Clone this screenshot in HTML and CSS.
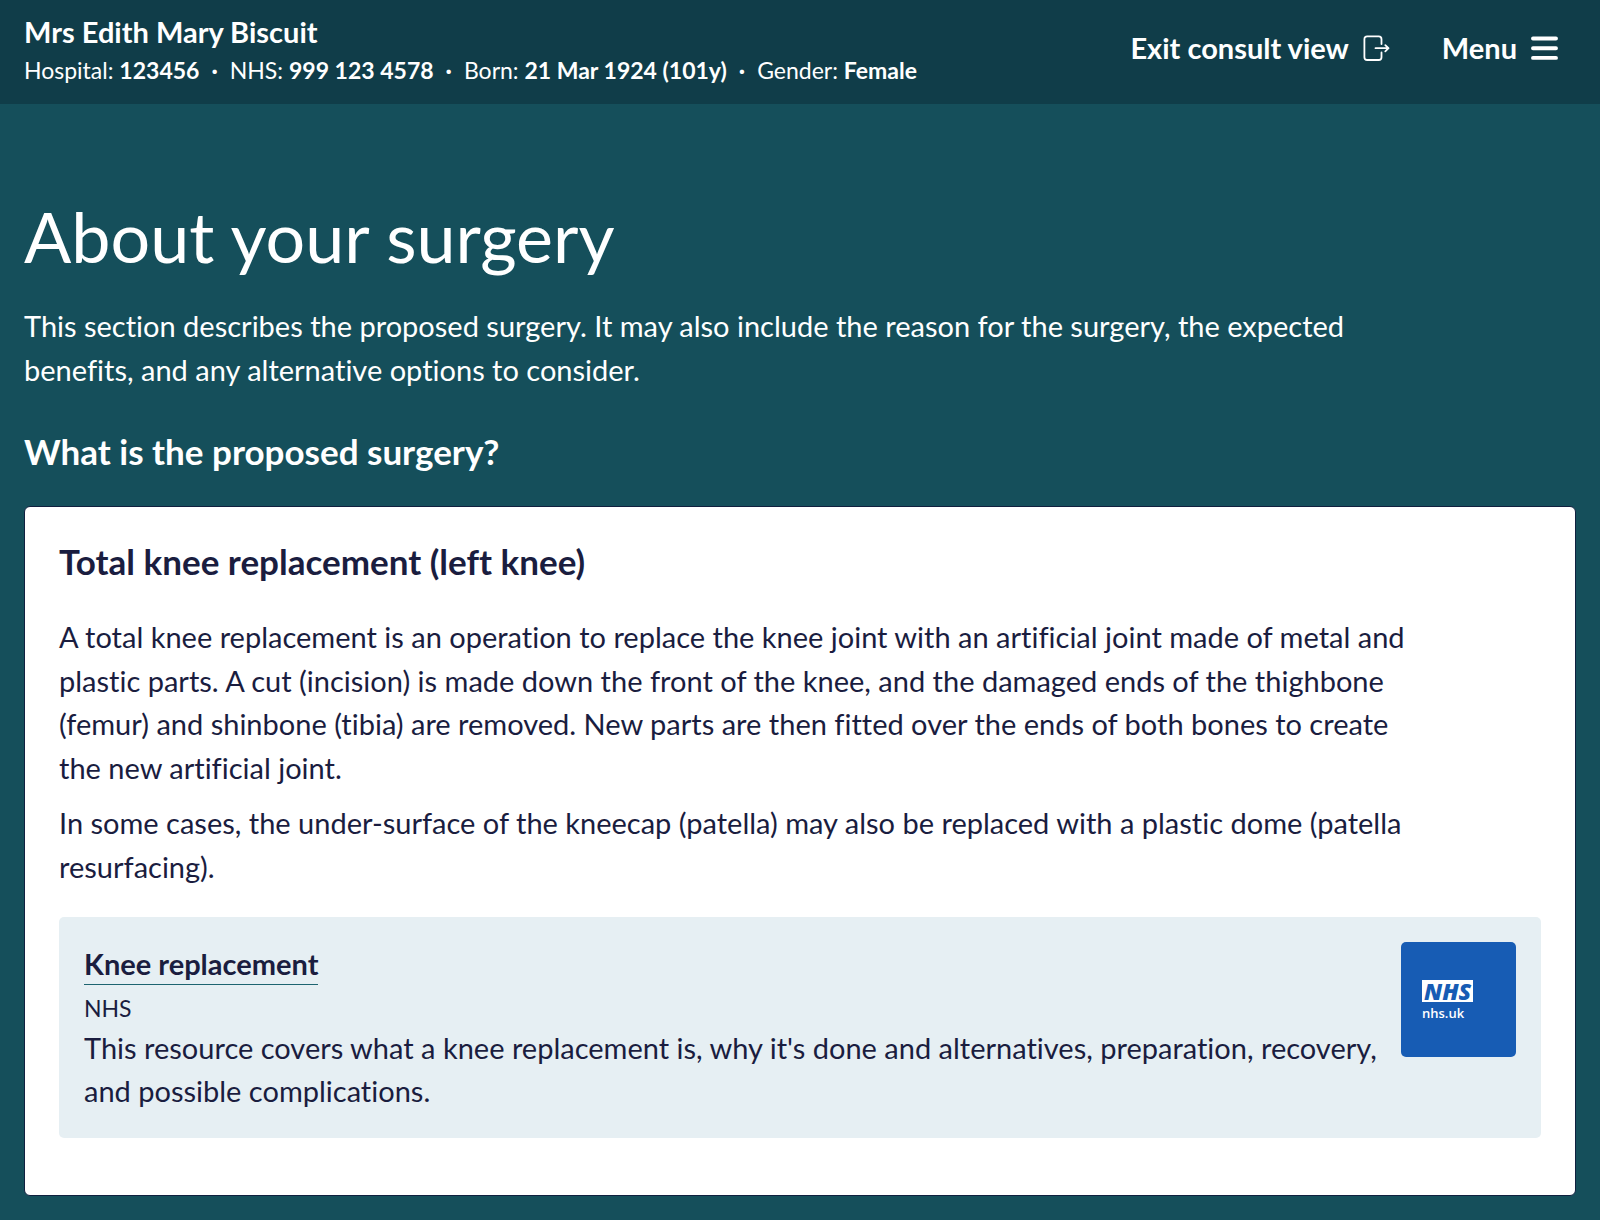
FILE: index.html
```html
<!DOCTYPE html>
<html lang="en">
<head>
<meta charset="utf-8">
<meta name="viewport" content="width=device-width, initial-scale=1">
<title>About your surgery</title>
<link rel="stylesheet" href="styles.css">
</head>
<body>
<header class="banner">
  <div class="patient">
    <p class="patient-name">Mrs Edith Mary Biscuit</p>
    <ul class="patient-details">
      <li>Hospital: <strong>123456</strong></li>
      <li>NHS: <strong>999 123 4578</strong></li>
      <li>Born: <strong>21 Mar 1924 (101y)</strong></li>
      <li>Gender: <strong>Female</strong></li>
    </ul>
  </div>
  <nav class="actions">
    <button type="button" class="action">Exit consult view
      <svg class="icon" viewBox="0 0 27 27" aria-hidden="true" fill="none" stroke="currentColor" stroke-width="1.8" stroke-linecap="round" stroke-linejoin="round">
        <path d="M18.500 9V4.200a2.800 2.800 0 0 0-2.800-2.800H4.200a2.800 2.800 0 0 0-2.800 2.800V22.200a2.800 2.800 0 0 0 2.800 2.800H15.700a2.800 2.800 0 0 0 2.800-2.800V17.500M12.500 13.200H25.500M22.300 10.100l3.200 3.100-3.200 3.100"/>
      </svg>
    </button>
    <button type="button" class="action">Menu
      <svg class="icon" viewBox="0 0 27 27" aria-hidden="true" fill="none" stroke="currentColor" stroke-width="3.900" stroke-linecap="round">
        <path d="M2 3.500H25M2 13.200H25M2 22.900H25"/>
      </svg>
    </button>
  </nav>
</header>
<main class="content">
  <h1 class="title">About your surgery</h1>
  <p class="intro">This section describes the proposed surgery. It may also include the reason for the surgery, the expected benefits, and any alternative options to consider.</p>
  <h2 class="question">What is the proposed surgery?</h2>
  <section class="card">
    <h3 class="card-title">Total knee replacement (left knee)</h3>
    <div class="prose">
      <p>A total knee replacement is an operation to replace the knee joint with an artificial joint made of metal and plastic parts. A cut (incision) is made down the front of the knee, and the damaged ends of the thighbone (femur) and shinbone (tibia) are removed. New parts are then fitted over the ends of both bones to create the new artificial joint.</p>
      <p>In some cases, the under-surface of the kneecap (patella) may also be replaced with a plastic dome (patella resurfacing).</p>
    </div>
    <article class="resource">
      <div class="resource-text">
        <a class="resource-link" href="#">Knee replacement</a>
        <p class="resource-source">NHS</p>
        <p>This resource covers what a knee replacement is, why it's done and alternatives, preparation, recovery, and possible complications.</p>
      </div>
      <div class="logo">
        <span class="logo-mark">NHS</span>
        <span class="logo-site">nhs.uk</span>
      </div>
    </article>
  </section>
</main>
</body>
</html>
```
FILE: styles.css
```css
* {
  box-sizing: border-box;
}

body {
  margin: 0;
  background: #154f5b;
  color: #fff;
  font-family: Lato, "Open Sans", sans-serif;
  font-size: 29px;
  font-variant-ligatures: none;
  line-height: 1.5;
}

h1, h2, h3, p, ul {
  margin: 0;
}

.banner {
  display: flex;
  justify-content: space-between;
  padding: 12px 24px 16px;
  background: #103d49;
}

.patient-name {
  font-weight: 700;
  line-height: 40px;
}

.patient-details {
  display: flex;
  padding: 0;
  list-style: none;
  font-size: 23px;
  line-height: 36px;
}

.patient-details li + li::before {
  content: "·";
  padding: 0 12px;
  font-weight: 700;
}

.actions {
  display: flex;
  align-items: center;
  gap: 52px;
  padding-right: 18px;
}

.action {
  display: flex;
  align-items: center;
  gap: 14px;
  padding: 0 0 4px;
  border: 0;
  background: none;
  color: inherit;
  font: inherit;
  font-weight: 700;
  cursor: pointer;
}

.icon {
  width: 27px;
  height: 27px;
}

.content {
  padding: 88px 24px 24px;
}

.title {
  font-size: 70px;
  font-weight: 400;
  line-height: 88px;
}

.intro {
  max-width: 1360px;
  margin-top: 24px;
}

.question {
  margin-top: 32px;
  font-size: 35px;
  font-weight: 700;
  line-height: 56px;
}

.card {
  margin-top: 27px;
  padding: 32px 34px 57px;
  border: 1px solid #10203f;
  border-radius: 6px;
  background: #fff;
  color: #1a1d3f;
}

.card-title {
  font-size: 35px;
  font-weight: 700;
  line-height: 44px;
}

.prose {
  display: grid;
  gap: 12px;
  max-width: 1360px;
  margin-top: 32px;
}

.resource {
  display: flex;
  align-items: flex-start;
  justify-content: space-between;
  gap: 12px;
  margin-top: 29px;
  padding: 25px;
  border-radius: 5px;
  background: #e6eff3;
}

.resource-link {
  display: inline-block;
  border-bottom: 1px solid #1d6470;
  color: inherit;
  font-weight: 700;
  line-height: 41px;
  text-decoration: none;
}

.resource-source {
  margin-top: 4px;
  font-size: 23px;
  line-height: 36px;
}

.logo {
  display: flex;
  flex: none;
  flex-direction: column;
  align-items: flex-start;
  width: 115px;
  height: 115px;
  padding: 38px 0 0 21px;
  border-radius: 5px;
  background: #175cb4;
  color: #fff;
}

.logo-mark {
  padding: 0 2px;
  background: #fff;
  color: #175cb4;
  font: italic 800 23px/22px "Open Sans", sans-serif;
}

.logo-site {
  font: 600 13px/22px "Open Sans", sans-serif;
}
```
